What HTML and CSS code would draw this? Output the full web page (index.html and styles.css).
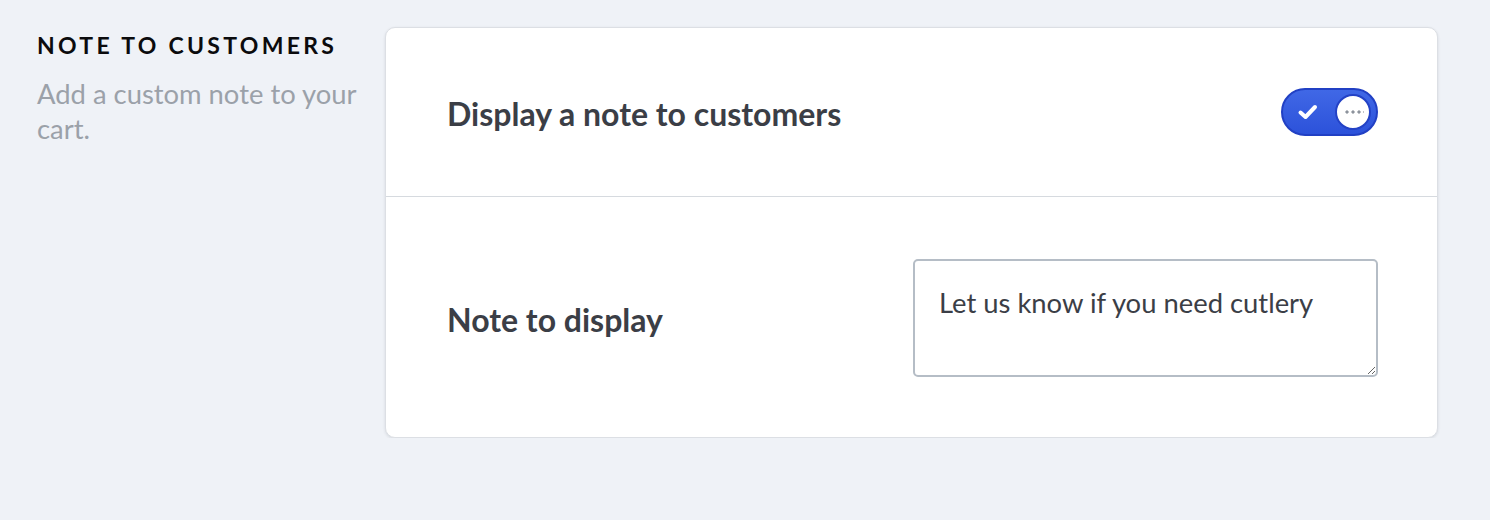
FILE: index.html
```html
<!DOCTYPE html>
<html lang="en">
<head>
  <meta charset="UTF-8">
  <meta name="viewport" content="width=device-width, initial-scale=1.0">
  <title>Cart note settings</title>
  <link rel="stylesheet" href="styles.css">
</head>
<body>
  <section class="settings">
    <!-- Section description -->
    <div class="intro">
      <h2>Note to customers</h2>
      <p>Add a custom note to your cart.</p>
    </div>

    <div class="card">
      <div class="row">
        <label class="row-label" for="showNote">Display a note to customers</label>
        <label class="toggle">
          <input type="checkbox" id="showNote" checked>
          <span class="track">
            <svg class="tick" width="22" height="18" viewBox="0 0 22 18">
              <path d="M3.5 9.5 L8.5 14 L18 4" fill="none" stroke="#fff" stroke-width="4" stroke-linecap="round" stroke-linejoin="round"/>
            </svg>
            <span class="knob"><span class="dots"></span></span>
          </span>
        </label>
      </div>
      <div class="row">
        <label class="row-label" for="noteText">Note to display</label>
        <textarea id="noteText">Let us know if you need cutlery</textarea>
      </div>
    </div>
  </section>
</body>
</html>
```

FILE: styles.css
```css
body {
  margin: 0;
  background: #eff2f7;
  font-family: Lato, "Open Sans", sans-serif;
  color: #3b3e46;
}
.settings {
  display: grid;
  grid-template-columns: 323px 1053px;
  column-gap: 25px;
  padding: 27px 52px 0 37px;
}
.intro h2 {
  margin: 3px 0 0;
  font-size: 23px;
  line-height: 30px;
  font-weight: 700;
  letter-spacing: 3.3px;
  text-transform: uppercase;
  color: #0b0b0d;
}
.intro p {
  margin: 16px 0 0;
  font-size: 27.4px;
  line-height: 35px;
  color: #9ba1a9;
}
.card {
  background: #fff;
  border: 1px solid #dcdfe4;
  border-radius: 10px;
  box-shadow: 0 1px 3px rgba(30, 40, 60, 0.12);
}
.row {
  display: flex;
  align-items: center;
  justify-content: space-between;
  padding: 60px 59px 60px 61px;
}
.row + .row {
  border-top: 1px solid #d6dadf;
  padding-top: 62px;
}
.row-label {
  font-size: 32px;
  line-height: 40px;
  font-weight: 700;
  color: #3b3e46;
  padding-top: 4px;
}
.toggle input {
  display: none;
}
.track {
  position: relative;
  display: flex;
  align-items: center;
  width: 97px;
  height: 48px;
  box-sizing: border-box;
  border: 2px solid #2140c4;
  border-radius: 24px;
  background: linear-gradient(#4068e6, #2c52da);
}
.tick {
  margin-left: 14px;
}
.knob {
  position: absolute;
  right: 5px;
  top: 4px;
  width: 36px;
  height: 36px;
  box-sizing: border-box;
  border: 2px solid #2342c6;
  border-radius: 50%;
  background: #fff;
  display: flex;
  align-items: center;
  justify-content: center;
}
.dots {
  width: 20px;
  height: 4px;
  margin-left: 1px;
  background: radial-gradient(circle, #8d939c 1.4px, transparent 1.8px) 0 0 / 6px 4px repeat-x;
}
textarea {
  width: 465px;
  height: 118px;
  box-sizing: border-box;
  padding: 25px 24px 20px;
  border: 2px solid #b5bdc6;
  border-radius: 5px;
  font-family: Lato, "Open Sans", sans-serif;
  font-size: 27.4px;
  line-height: 34px;
  color: #3b3e46;
  resize: vertical;
}
```
